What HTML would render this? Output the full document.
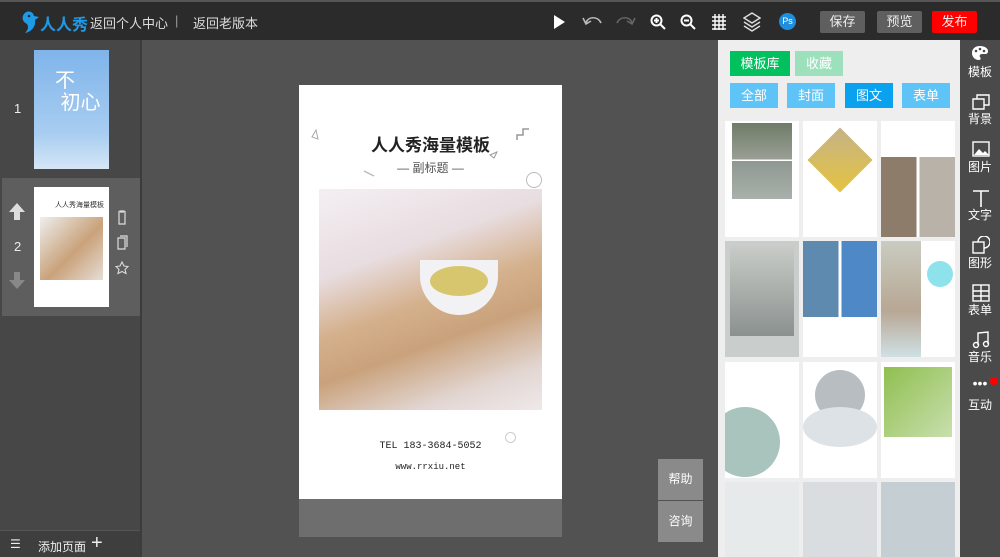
<!DOCTYPE html>
<html><head><meta charset="utf-8"><style>
*{margin:0;padding:0;box-sizing:border-box}
body{width:1000px;height:557px;overflow:hidden;background:#525252;font-family:"Liberation Sans","Noto Sans CJK SC",sans-serif;position:relative}
.a{position:absolute}
.top{left:0;top:0;width:1000px;height:40px;background:#2b2b2b;border-top:2px solid #555}
.t{color:#ddd;font-size:13px}
.btn{position:absolute;top:9px;height:22px;width:45px;color:#eee;font-size:13px;text-align:center;line-height:22px;border-radius:2px}
.tab{position:absolute;height:25px;color:#fff;font-size:13px;text-align:center;line-height:25px}
.side{position:absolute;left:960px;width:40px;text-align:center;color:#fff;font-size:12px}
.th{position:absolute;width:74px;height:116px;overflow:hidden}
</style></head><body>
<div class="a top">
 <svg class="a" style="left:18px;top:8px" width="22" height="24" viewBox="0 0 22 24"><path d="M6 4c3-4 9-3 10 2l5 1-4 3c1 7-4 12-10 13 3-3 4-6 2-9C5 12 3 8 6 4z" fill="#1e9be8"/><circle cx="11" cy="6" r="1.3" fill="#2b2b2b"/></svg>
 <div class="a" style="left:40px;top:9px;color:#1e9be8;font-size:16px;font-weight:bold">人人秀</div>
 <div class="a t" style="left:90px;top:11px">返回个人中心</div>
 <div class="a t" style="left:175px;top:11px;color:#999">|</div>
 <div class="a t" style="left:193px;top:11px">返回老版本</div>
 <svg class="a" style="left:552px;top:12px" width="14" height="16"><path d="M2 1L13 8L2 15Z" fill="#fff"/></svg>
 <svg class="a" style="left:582px;top:11px" width="22" height="16"><path d="M4 10C6 3 16 3 19 10" stroke="#bbb" stroke-width="1.6" fill="none"/><path d="M1 5L4 11L9 8" stroke="#bbb" stroke-width="1.6" fill="none"/></svg>
 <svg class="a" style="left:614px;top:11px" width="22" height="16"><path d="M3 10C6 3 16 3 18 10" stroke="#666" stroke-width="1.6" fill="none"/><path d="M21 5L18 11L13 8" stroke="#666" stroke-width="1.6" fill="none"/></svg>
 <svg class="a" style="left:650px;top:12px" width="16" height="16"><circle cx="6.5" cy="6.5" r="5" stroke="#fff" stroke-width="2" fill="none"/><path d="M10 10L15 15M4 6.5h5M6.5 4v5" stroke="#fff" stroke-width="2"/></svg>
 <svg class="a" style="left:680px;top:12px" width="16" height="16"><circle cx="6.5" cy="6.5" r="5" stroke="#fff" stroke-width="2" fill="none"/><path d="M10 10L15 15M4 6.5h5" stroke="#fff" stroke-width="2"/></svg>
 <svg class="a" style="left:711px;top:11px" width="16" height="18"><path d="M4 1v16M8 1v16M12 1v16M1 4h14M1 8h14M1 12h14M1 16h14" stroke="#fff" stroke-width="1.4"/></svg>
 <svg class="a" style="left:743px;top:10px" width="18" height="20"><path d="M9 1L17 6L9 11L1 6Z M1 10L9 15L17 10 M1 14L9 19L17 14" stroke="#ddd" stroke-width="1.4" fill="none"/></svg>
 <div class="a" style="left:779px;top:11px;width:17px;height:17px;border-radius:50%;background:#1e8fe0;color:#fff;font-size:9px;line-height:17px;text-align:center">Ps</div>
 <div class="btn" style="left:820px;background:#5f5f5f">保存</div>
 <div class="btn" style="left:877px;background:#5f5f5f">预览</div>
 <div class="btn" style="left:932px;background:#f00">发布</div>
</div>
<div class="a" style="left:0;top:40px;width:140px;height:517px;background:#474747"></div>
<div class="a" style="left:140px;top:40px;width:2px;height:517px;background:#3c3c3c"></div>
<div class="a" style="left:2px;top:178px;width:138px;height:138px;background:#5e5e5e"></div>
<div class="a" style="left:14px;top:101px;color:#eee;font-size:13px">1</div>
<div class="a" style="left:34px;top:50px;width:75px;height:119px;background:linear-gradient(180deg,#7fb4ea,#a8cdf1 70%,#d5e6f6)"></div>
<div class="a" style="left:55px;top:70px;color:#fff;font-size:20px;line-height:22px">不<br>&nbsp;初心</div>
<div class="a" style="left:14px;top:239px;color:#eee;font-size:13px">2</div>
<svg class="a" style="left:8px;top:202px" width="18" height="18"><path d="M9 1L17 10H12V18H6V10H1Z" fill="#ddd"/></svg>
<svg class="a" style="left:8px;top:272px" width="18" height="18"><path d="M9 17L17 8H12V0H6V8H1Z" fill="#888"/></svg>
<div class="a" style="left:34px;top:187px;width:75px;height:120px;background:#fff"></div>
<div class="a" style="left:55px;top:200px;font-size:7px;color:#333">人人秀海量模板</div>
<div class="a" style="left:40px;top:217px;width:63px;height:63px;background:linear-gradient(135deg,#eee,#c9a27a 55%,#e6ddd6)"></div>
<svg class="a" style="left:115px;top:209px" width="14" height="78"><path d="M3 3h8M5 3v-1h4v1M4 4v11h6V4" stroke="#ddd" fill="none" stroke-width="1.2"/><path d="M3 29h7v11H3ZM5 27h7v11" stroke="#ddd" fill="none" stroke-width="1.2"/><path d="M7 53l2 4 4 .5-3 3 1 4-4-2-4 2 1-4-3-3 4-.5z" stroke="#ddd" fill="none" stroke-width="1.1"/></svg>
<div class="a" style="left:0;top:530px;width:140px;height:27px;background:#3e3e3e;border-top:1px solid #555"></div>
<div class="a" style="left:10px;top:537px;color:#eee;font-size:12px">☰</div>
<div class="a" style="left:38px;top:538px;color:#eee;font-size:12px">添加页面</div>
<div class="a" style="left:91px;top:532px;color:#eee;font-size:20px">+</div>
<div class="a" style="left:299px;top:85px;width:263px;height:414px;background:#fff"></div>
<div class="a" style="left:299px;top:499px;width:263px;height:38px;background:#6e6e6e"></div>
<div class="a" style="left:299px;top:131px;width:263px;text-align:center;font-size:17px;font-weight:bold;color:#222">人人秀海量模板</div>
<div class="a" style="left:299px;top:159px;width:263px;text-align:center;font-size:12px;color:#555">— 副标题 —</div>
<svg class="a" style="left:310px;top:125px" width="240" height="60"><path d="M6 5l2 9-6-2z" stroke="#aaa" fill="none"/><path d="M207 15v-5h6V4h6" stroke="#999" fill="none" stroke-width="1.5"/><path d="M180 30l7-3-3 6z" stroke="#999" fill="none"/><path d="M54 46l10 5" stroke="#bbb" stroke-width="1.5"/></svg>
<div class="a" style="left:526px;top:172px;width:16px;height:16px;border:1.5px solid #bbb;border-radius:50%"></div>
<div class="a" style="left:319px;top:189px;width:223px;height:221px;background:linear-gradient(160deg,#f4eff3 0%,#e8dde0 30%,#d4b08c 50%,#c9a27c 65%,#e2d6d2 85%,#efe8ea)"></div>
<div class="a" style="left:420px;top:260px;width:78px;height:55px;border-radius:0 0 40px 40px;background:#f2f2f4"></div>
<div class="a" style="left:430px;top:266px;width:58px;height:30px;border-radius:50%;background:#d8c66e"></div>
<div class="a" style="left:299px;top:441px;width:263px;text-align:center;font-family:'Liberation Mono',monospace;font-size:10px;color:#222">TEL 183-3684-5052</div>
<div class="a" style="left:299px;top:462px;width:263px;text-align:center;font-family:'Liberation Mono',monospace;font-size:9px;color:#222">www.rrxiu.net</div>
<div class="a" style="left:505px;top:432px;width:11px;height:11px;border:1.5px solid #ccc;border-radius:50%"></div>
<div class="a" style="left:658px;top:459px;width:45px;height:41px;background:#8a8a8a;color:#fff;font-size:12px;line-height:41px;text-align:center">帮助</div>
<div class="a" style="left:658px;top:501px;width:45px;height:41px;background:#8a8a8a;color:#fff;font-size:12px;line-height:41px;text-align:center">咨询</div>
<div class="a" style="left:718px;top:40px;width:242px;height:517px;background:#eeeeee"></div>
<div class="tab" style="left:730px;top:51px;width:60px;background:#00c15e">模板库</div>
<div class="tab" style="left:795px;top:51px;width:48px;background:#9de0bc">收藏</div>
<div class="tab" style="left:730px;top:83px;width:48px;background:#5ec4f8">全部</div>
<div class="tab" style="left:787px;top:83px;width:48px;background:#5ec4f8">封面</div>
<div class="tab" style="left:845px;top:83px;width:48px;background:#0aa1ee">图文</div>
<div class="tab" style="left:902px;top:83px;width:48px;background:#5ec4f8">表单</div>
<div class="th" style="left:725px;top:121px;background:#fff"><div class="a" style="left:7px;top:2px;width:60px;height:76px;background:linear-gradient(180deg,#6f7c68,#9a9f95 48%,#fff 48%,#fff 50%,#8e9890 50%,#aab0ab)"></div></div>
<div class="th" style="left:803px;top:121px;background:#fff"><div class="a" style="left:14px;top:16px;width:46px;height:46px;transform:rotate(45deg);background:linear-gradient(135deg,#c5b388,#e4c33f)"></div></div>
<div class="th" style="left:881px;top:121px;background:#fff"><div class="a" style="left:0;top:36px;width:74px;height:80px;background:linear-gradient(90deg,#8d7c6a 48%,#fff 48%,#fff 52%,#b9b2a8 52%)"></div></div>
<div class="th" style="left:725px;top:241px;background:#c9cdcc"><div class="a" style="left:5px;top:5px;width:64px;height:90px;background:linear-gradient(180deg,#c8ccc8,#8b918f)"></div></div>
<div class="th" style="left:803px;top:241px;background:#fff"><div class="a" style="left:0;top:0;width:74px;height:76px;background:linear-gradient(90deg,#5e8ab0 48%,#fff 48%,#fff 52%,#4e88c6 52%)"></div></div>
<div class="th" style="left:881px;top:241px;background:#fff"><div class="a" style="left:0;top:0;width:40px;height:116px;background:linear-gradient(180deg,#c9ccc0,#b8a794 60%,#cfe0e4)"></div><div class="a" style="left:46px;top:20px;width:26px;height:26px;border-radius:50%;background:#8ee2ec"></div></div>
<div class="th" style="left:725px;top:362px;background:#fff"><div class="a" style="left:-15px;top:45px;width:70px;height:70px;border-radius:50%;background:#a8c4bc"></div></div>
<div class="th" style="left:803px;top:362px;background:#fff"><div class="a" style="left:12px;top:8px;width:50px;height:50px;border-radius:50%;background:#b8bdc2"></div><div class="a" style="left:0;top:45px;width:74px;height:40px;border-radius:50%;background:#dde2e6"></div></div>
<div class="th" style="left:881px;top:362px;background:#fff"><div class="a" style="left:3px;top:5px;width:68px;height:70px;background:linear-gradient(135deg,#8fbf50,#c9dfae)"></div></div>
<div class="th" style="left:725px;top:482px;height:75px;background:#e6eaea"></div>
<div class="th" style="left:803px;top:482px;height:75px;background:#d9dde0"></div>
<div class="th" style="left:881px;top:482px;height:75px;background:#c5ced2"></div>
<div class="a" style="left:960px;top:40px;width:40px;height:517px;background:#4a4a4a"></div>
<div class="a" style="left:954px;top:60px;width:0;height:0;border-top:6px solid transparent;border-bottom:6px solid transparent;border-right:6px solid #eee"></div>
<svg class="a" style="left:971px;top:45px" width="18" height="16"><path d="M9 1C4 1 1 4 1 8s3 7 7 7c2 0 2-2 1-3s0-3 2-3h3c2 0 3-1 3-3 0-3-4-5-8-5z" fill="#fff"/><circle cx="5" cy="6" r="1.3" fill="#4a4a4a"/><circle cx="9" cy="4" r="1.3" fill="#4a4a4a"/><circle cx="13" cy="6" r="1.3" fill="#4a4a4a"/></svg>
<div class="side" style="top:63px">模板</div>
<svg class="a" style="left:972px;top:94px" width="18" height="16"><path d="M1 5h11v10H1ZM5 5V1h12v10h-5" stroke="#fff" fill="none" stroke-width="1.4"/></svg>
<div class="side" style="top:110px">背景</div>
<svg class="a" style="left:972px;top:141px" width="18" height="16"><rect x="1" y="1" width="16" height="14" stroke="#fff" fill="none" stroke-width="1.4"/><path d="M2 14l5-6 4 4 2-2 4 4Z" fill="#fff"/></svg>
<div class="side" style="top:158px">图片</div>
<svg class="a" style="left:972px;top:189px" width="18" height="18"><path d="M1 2h16M9 2v16" stroke="#fff" stroke-width="1.6"/></svg>
<div class="side" style="top:206px">文字</div>
<svg class="a" style="left:972px;top:236px" width="18" height="18"><rect x="1" y="6" width="11" height="11" stroke="#fff" fill="none" stroke-width="1.4"/><path d="M6 6a6 6 0 1 1 6 6" stroke="#fff" fill="none" stroke-width="1.4"/></svg>
<div class="side" style="top:254px">图形</div>
<svg class="a" style="left:972px;top:284px" width="18" height="18"><rect x="1" y="1" width="16" height="16" stroke="#fff" fill="none" stroke-width="1.4"/><path d="M1 7h16M1 12h16M9 1v16" stroke="#fff" stroke-width="1.4"/></svg>
<div class="side" style="top:301px">表单</div>
<svg class="a" style="left:972px;top:331px" width="18" height="18"><path d="M6 14V2l10-1v12" stroke="#fff" fill="none" stroke-width="1.4"/><circle cx="4" cy="14" r="2.5" stroke="#fff" fill="none" stroke-width="1.4"/><circle cx="14" cy="13" r="2.5" stroke="#fff" fill="none" stroke-width="1.4"/></svg>
<div class="side" style="top:348px">音乐</div>
<div class="side" style="top:378px;font-size:14px;line-height:10px">•••</div>
<div class="a" style="left:990px;top:377px;width:8px;height:8px;border-radius:50%;background:#f00"></div>
<div class="side" style="top:396px">互动</div>
</body></html>
